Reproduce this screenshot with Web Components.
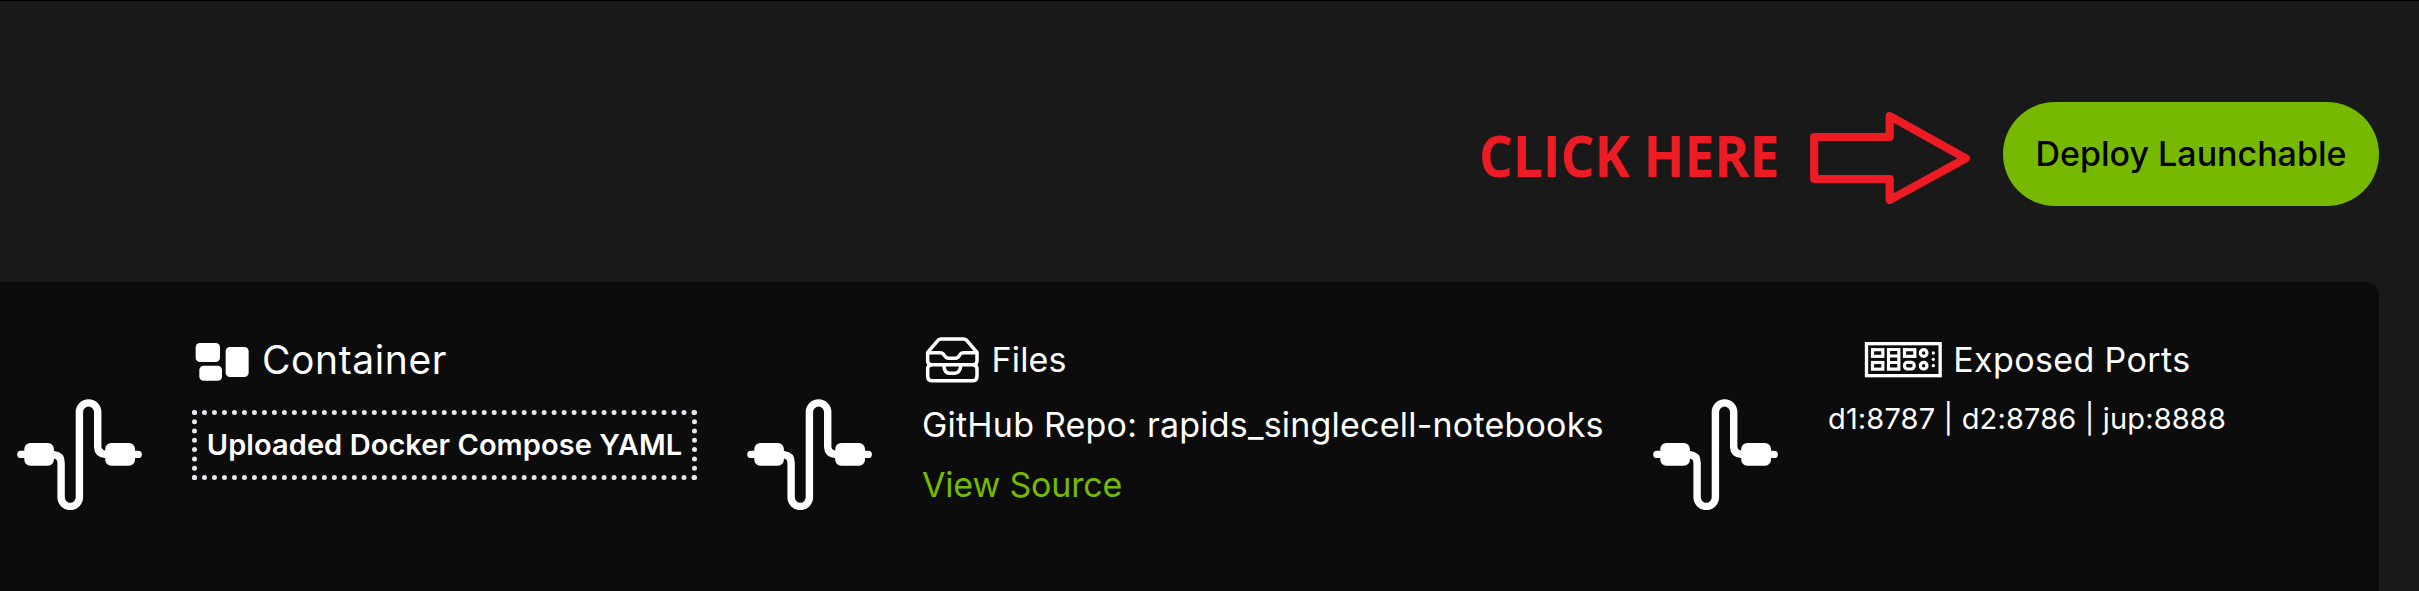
<!DOCTYPE html>
<html lang="en">
<head>
<meta charset="utf-8">
<title>Launchable</title>
<style>
html,body{margin:0;height:100%;background:#191919}
body{font-family:Inter,"Noto Sans",sans-serif;color:#fff;overflow:hidden}
</style>
</head>
<body>
<launch-page>
  <click-hint slot="header">CLICK HERE</click-hint>
  <deploy-button slot="header">Deploy Launchable</deploy-button>
  <cable-link></cable-link>
  <info-section style="width:505px">
    <section-title icon="container" style="--size:39px;--gap:12px;letter-spacing:.6px">Container</section-title>
    <dotted-label>Uploaded Docker Compose YAML</dotted-label>
  </info-section>
  <cable-link></cable-link>
  <info-section style="width:681px">
    <section-title icon="files" style="letter-spacing:.16px">Files</section-title>
    <text-line style="margin-top:7px;letter-spacing:.21px">GitHub Repo: rapids_singlecell-notebooks</text-line>
    <text-line style="color:#76b900;letter-spacing:-.17px">View Source</text-line>
  </info-section>
  <cable-link></cable-link>
  <info-section style="width:398px;align-items:center">
    <section-title icon="ports" style="--gap:11px;letter-spacing:.38px">Exposed Ports</section-title>
    <text-line style="--size:29px;--line:44px;margin-top:9px;letter-spacing:.15px">d1:8787 | d2:8786 | jup:8888</text-line>
  </info-section>
</launch-page>
<script>
const define = (name, markup, setup) => customElements.define(name, class extends HTMLElement {
  constructor() {
    super();
    this.attachShadow({ mode: 'open' }).innerHTML = markup;
  }
  connectedCallback() { if (setup) setup(this, this.shadowRoot); }
});

define('launch-page', `
<style>
:host{display:flex;flex-direction:column;width:2419px;height:591px;box-sizing:border-box;border-top:1px solid #000;background:#191919}
header{display:flex;justify-content:flex-end;align-items:center;height:104px;padding:101px 40px 76px 0;flex:none}
main{display:flex;align-items:flex-start;gap:50px;flex:1;margin-right:40px;padding:50px 0 0 17px;background:#0c0c0c;border-top-right-radius:14px}
</style>
<header><slot name="header"></slot></header>
<main><slot></slot></main>`);

define('click-hint', `
<style>
:host{display:flex;align-items:center;color:#ed1c24;margin-right:32px}
.box{width:300px;margin-right:31px;padding-top:4px}
.text{display:inline-block;white-space:nowrap;font:700 56.5px/68px "Open Sans",sans-serif;transform:scaleX(.943);transform-origin:0 50%}
svg{display:block;margin-top:8px}
</style>
<div class="box"><span class="text"><slot></slot></span></div>
<svg width="161" height="96" viewBox="1810 110 161 96" fill="none" stroke="currentColor" stroke-width="8.2" stroke-linejoin="round"><path d="M1814.2 137H1889.700V116L1965.800 158.300L1889.700 200V179H1814.200Z"/></svg>`);

define('deploy-button', `
<style>
:host{display:block}
button{display:block;width:376px;height:104px;padding:0;border:0;border-radius:52px;background:#76b900;color:#000;font:500 34px/104px Inter,sans-serif;text-align:center}
</style>
<button type="button"><slot></slot></button>`);

define('cable-link', `
<style>:host{display:block;flex:none;margin-top:67px}svg{display:block}</style>
<svg width="125" height="111" viewBox="17 19 125 111" fill="none" stroke="#fff" stroke-width="7.4" stroke-linecap="round">
<path d="M20.9 74.4H28M132 74.4H138.2M52 74.7H54Q61.1 75.4 61.1 83V117.3a9.15 9.15 0 0 0 18.3 0V32a9.15 9.15 0 0 1 18.3 0V67Q98 74 106 74.5"/>
<rect x="24.3" y="63" width="29.6" height="22.8" rx="6" fill="#fff" stroke="none"/>
<rect x="105.2" y="63" width="29.8" height="22.8" rx="6" fill="#fff" stroke="none"/>
</svg>`);

define('info-section', `
<style>:host{display:flex;flex-direction:column;align-items:flex-start;flex:none}</style>
<slot></slot>`);

const icons = {
  container: `<svg width="56" height="44" viewBox="42 54 168 132" fill="#fff" style="margin-left:2px">
<rect x="47" y="69" width="73" height="57" rx="13"/><rect x="58" y="137" width="68" height="45.5" rx="13"/><rect x="137" y="81" width="69" height="90" rx="13"/></svg>`,
  files: `<svg width="56" height="48" viewBox="42 48 168 144" fill="none" stroke="#fff" stroke-width="10.5" stroke-linejoin="round" style="margin-left:2px">
<path d="M65 134Q53 134 53 122V97L84 61Q88 57 93 57H161Q166 57 170 61L201 97V122Q201 134 189 134"/>
<path d="M53 98H90Q98 98 102 105Q108 115 116 115H136Q144 115 149 105Q153 98 162 98H201"/>
<path d="M67 134H187Q201 134 201 148V168Q201 182.500 187 182.500H67Q53 182.500 53 168V148Q53 134 67 134Z"/>
<path d="M101 136Q104 160 118 160H134Q149 160 153 136"/></svg>`,
  ports: `<svg width="78.67" height="38" viewBox="162 63 236 114" fill="none" stroke="#fff" stroke-width="9.5">
<rect x="169.500" y="71" width="221" height="96" stroke-width="10"/>
<rect x="187.500" y="89" width="31" height="20"/><rect x="187.500" y="127.500" width="31" height="20"/>
<path d="M235.500 88.500H266.500V147.500H235.500ZM235.500 108H266.500M235.500 127.500H266.500"/>
<rect x="283.500" y="89" width="31" height="20"/><rect x="283.500" y="127" width="29" height="20" rx="9"/>
<circle cx="341" cy="99" r="10"/><circle cx="341" cy="137" r="10"/>
<g fill="#fff" stroke="none"><circle cx="370" cy="99" r="5"/><circle cx="370" cy="118" r="5"/><circle cx="370" cy="137" r="5"/></g></svg>`
};
define('section-title', `
<style>
:host{display:flex;align-items:center;gap:var(--gap,11.5px);height:56px;font-size:var(--size,34px);line-height:56px;white-space:nowrap}
#icon,svg{display:block;flex:none}
</style>
<span id="icon"></span><span><slot></slot></span>`,
  (el, root) => { root.getElementById('icon').innerHTML = icons[el.getAttribute('icon')]; });

define('text-line', `
<style>:host{display:block;font-size:var(--size,34px);line-height:var(--line,60px);white-space:nowrap}</style>
<slot></slot>`);

define('dotted-label', `
<style>:host{display:block;box-sizing:border-box;width:505px;height:70px;margin-top:22px;border:5px dotted #e5e7eb;font-size:29px;font-weight:600;line-height:60px;letter-spacing:.068px;text-align:center;white-space:nowrap}</style>
<slot></slot>`);
</script>
</body>
</html>
